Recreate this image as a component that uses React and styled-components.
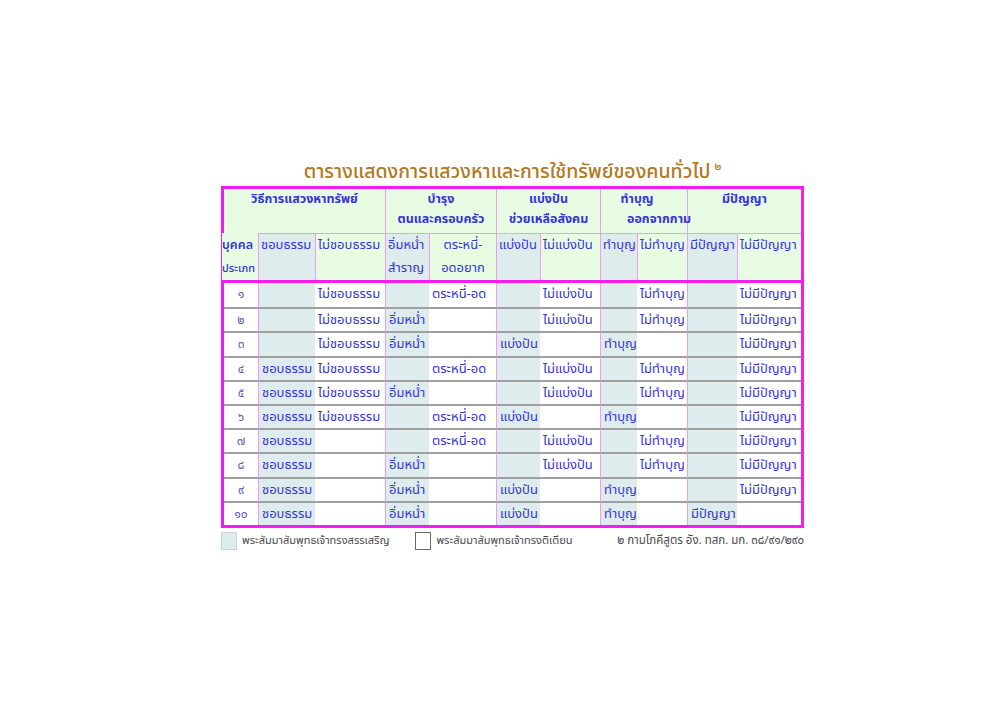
import React from "react";
import styled, { createGlobalStyle } from "styled-components";

const GlobalStyle = createGlobalStyle`
  body {
    margin: 0;
    background: #ffffff;
    font-family: "Noto Sans Thai", "Noto Sans", "DejaVu Sans", sans-serif;
  }
`;

const approved = [1, 3, 5, 7, 9]; // คอลัมน์ที่พระพุทธเจ้าทรงสรรเสริญ (พื้นสีฟ้าเทา)
const groupStarts = [1, 3, 5, 7, 9];

const subHeads = [
  { label: ["ชอบธรรม"] },
  { label: ["ไม่ชอบธรรม"] },
  { label: ["อิ่มหน่ำ", "สำราญ"] },
  { label: ["ตระหนี่-", "อดอยาก"], align: "center" },
  { label: ["แบ่งปัน"] },
  { label: ["ไม่แบ่งปัน"] },
  { label: ["ทำบุญ"] },
  { label: ["ไม่ทำบุญ"] },
  { label: ["มีปัญญา"] },
  { label: ["ไม่มีปัญญา"] },
];

const rows = [
  ["๑", "", "ไม่ชอบธรรม", "", "ตระหนี่-อด", "", "ไม่แบ่งปัน", "", "ไม่ทำบุญ", "", "ไม่มีปัญญา"],
  ["๒", "", "ไม่ชอบธรรม", "อิ่มหน่ำ", "", "", "ไม่แบ่งปัน", "", "ไม่ทำบุญ", "", "ไม่มีปัญญา"],
  ["๓", "", "ไม่ชอบธรรม", "อิ่มหน่ำ", "", "แบ่งปัน", "", "ทำบุญ", "", "", "ไม่มีปัญญา"],
  ["๔", "ชอบธรรม", "ไม่ชอบธรรม", "", "ตระหนี่-อด", "", "ไม่แบ่งปัน", "", "ไม่ทำบุญ", "", "ไม่มีปัญญา"],
  ["๕", "ชอบธรรม", "ไม่ชอบธรรม", "อิ่มหน่ำ", "", "", "ไม่แบ่งปัน", "", "ไม่ทำบุญ", "", "ไม่มีปัญญา"],
  ["๖", "ชอบธรรม", "ไม่ชอบธรรม", "", "ตระหนี่-อด", "แบ่งปัน", "", "ทำบุญ", "", "", "ไม่มีปัญญา"],
  ["๗", "ชอบธรรม", "", "", "ตระหนี่-อด", "", "ไม่แบ่งปัน", "", "ไม่ทำบุญ", "", "ไม่มีปัญญา"],
  ["๘", "ชอบธรรม", "", "อิ่มหน่ำ", "", "", "ไม่แบ่งปัน", "", "ไม่ทำบุญ", "", "ไม่มีปัญญา"],
  ["๙", "ชอบธรรม", "", "อิ่มหน่ำ", "", "แบ่งปัน", "", "ทำบุญ", "", "", "ไม่มีปัญญา"],
  ["๑๐", "ชอบธรรม", "", "อิ่มหน่ำ", "", "แบ่งปัน", "", "ทำบุญ", "", "มีปัญญา", ""],
];

const App = () => {
  return (
    <>
      <GlobalStyle />
      <Page>
        <Title>
          ตารางแสดงการแสวงหาและการใช้ทรัพย์ของคนทั่วไป<Sup>๒</Sup>
        </Title>
        <Table>
          <GroupHead $span={3}>วิธีการแสวงหาทรัพย์</GroupHead>
          <GroupHead $span={2} $line>
            บำรุง<br />ตนและครอบครัว
          </GroupHead>
          <GroupHead $span={2} $line>
            แบ่งปัน<br />ช่วยเหลือสังคม
          </GroupHead>
          <GroupHead $span={2} $line $overflow>
            <HeadLine $shift={-14}>ทำบุญ</HeadLine>
            <HeadLine $shift={26}>ออกจากกาม</HeadLine>
          </GroupHead>
          <GroupHead $span={2} $line>มีปัญญา</GroupHead>

          <PersonHead>
            บุคคล<br />
            <small>ประเภท</small>
          </PersonHead>
          {subHeads.map((h, i) => (
            <SubHead key={i} $shade={approved.includes(i + 1)} $align={h.align}>
              {h.label.map((l) => (
                <div key={l}>{l}</div>
              ))}
            </SubHead>
          ))}

          <Divider />

          {rows.map((r, ri) =>
            r.map((v, ci) =>
              ci === 0 ? (
                <NumCell key={ri + "-" + ci} $first={ri === 0}>{v}</NumCell>
              ) : (
                <BodyCell
                  key={ri + "-" + ci}
                  $first={ri === 0}
                  $shade={approved.includes(ci)}
                  $line={groupStarts.includes(ci)}
                >
                  {v}
                </BodyCell>
              )
            )
          )}
        </Table>

        <Legend>
          <LegendItem>
            <Swatch $shade />
            พระสัมมาสัมพุทธเจ้าทรงสรรเสริญ
          </LegendItem>
          <LegendItem>
            <Swatch />
            พระสัมมาสัมพุทธเจ้าทรงติเตียน
          </LegendItem>
          <Source>๒ กามโภคีสูตร อัง. ทสก. มก. ๓๘/๙๑/๒๙๐</Source>
        </Legend>
      </Page>
    </>
  );
};

const Page = styled.div`
  width: 583px;
  padding: 159px 0 0 221px;
`;

const Title = styled.h1`
  margin: 0 0 0 0;
  text-align: center;
  font-size: 19.5px;
  line-height: 27px;
  font-weight: 500;
  color: #b07a1f;
`;

const Sup = styled.sup`
  font-size: 11px;
  margin-left: 4px;
  vertical-align: 8px;
  line-height: 0;
`;

const Table = styled.div`
  display: grid;
  grid-template-columns: 34px 57px 70px 44px 67px 44px 60px 37px 50px 50px 64px;
  grid-template-rows: 44px 47px 3px repeat(10, 24.2px);
  border: 3px solid #f41cf0;
  color: #3434d6;
  font-size: 13px;
`;

const GroupHead = styled.div`
  grid-column: span ${(p) => p.$span};
  position: ${(p) => (p.$overflow ? "relative" : "static")};
  z-index: ${(p) => (p.$overflow ? 1 : "auto")};
  background: #e8fce4;
  border-left: ${(p) => (p.$line ? "1px solid #f29bf0" : "none")};
  text-align: center;
  font-weight: 700;
  font-size: 12.5px;
  line-height: 20px;
  padding-top: 1px;
  white-space: nowrap;
`;

const HeadLine = styled.div`
  padding-left: ${(p) => (p.$shift > 0 ? p.$shift : 0)}px;
  padding-right: ${(p) => (p.$shift < 0 ? -p.$shift : 0)}px;
`;

const PersonHead = styled.div`
  background: #e8fce4;
  font-weight: 600;
  font-size: 12.5px;
  line-height: 23px;
  padding-top: 1px;
  white-space: nowrap;
  margin-left: -2px;

  small {
    font-size: 11px;
    font-weight: 500;
  }
`;

const SubHead = styled.div`
  background: ${(p) => (p.$shade ? "#dfeced" : "#e8fce4")};
  border-left: 1px solid #f29bf0;
  border-top: 1px solid #f29bf0;
  text-align: ${(p) => p.$align || "left"};
  padding: 0 2px;
  line-height: 23px;
  white-space: nowrap;
`;

const Divider = styled.div`
  grid-column: 1 / -1;
  background: #f41cf0;
`;

const NumCell = styled.div`
  background: #ffffff;
  border-top: ${(p) => (p.$first ? "none" : "2px solid #a0a0a0")};
  text-align: center;
  line-height: 22px;
  color: #5b5bc0;
  font-size: 12px;
`;

const BodyCell = styled.div`
  background: ${(p) => (p.$shade ? "#dfeced" : "#ffffff")};
  border-top: ${(p) => (p.$first ? "none" : "2px solid #a0a0a0")};
  border-left: ${(p) => (p.$line ? "1px solid #f29bf0" : "none")};
  padding: 0 3px;
  line-height: 22px;
  white-space: nowrap;
`;

const Legend = styled.div`
  display: flex;
  align-items: center;
  margin-top: 4px;
  font-size: 11px;
  color: #4a4a4a;
  white-space: nowrap;
`;

const LegendItem = styled.div`
  display: flex;
  align-items: center;
  gap: 5px;
  margin-right: 26px;
`;

const Swatch = styled.span`
  display: inline-block;
  width: 14px;
  height: 16px;
  border: 1px solid ${(p) => (p.$shade ? "#c4d8d8" : "#6a6a6a")};
  background: ${(p) => (p.$shade ? "#dfeced" : "#ffffff")};
`;

const Source = styled.div`
  margin-left: auto;
  font-size: 11.5px;
`;

export default App;
